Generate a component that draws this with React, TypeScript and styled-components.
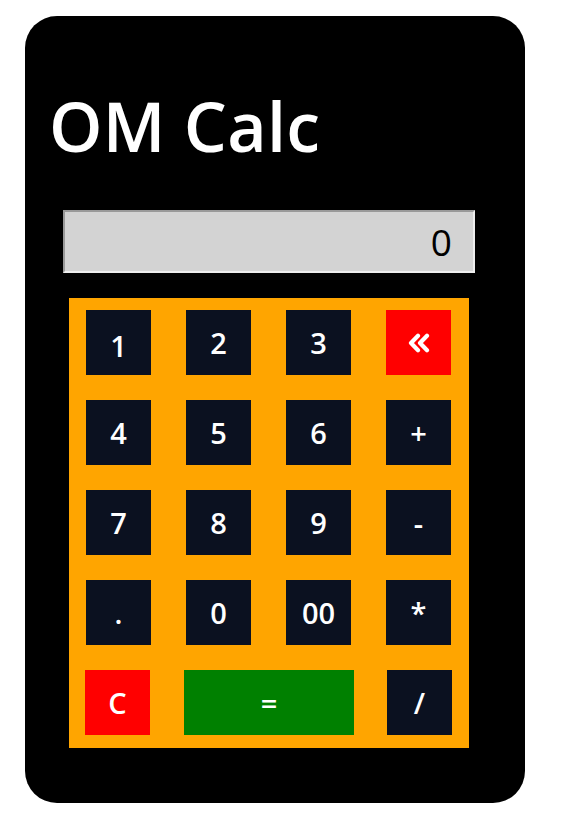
import * as React from 'react'
import styled, { createGlobalStyle } from 'styled-components'

const GlobalStyle = createGlobalStyle`
  body {
    margin: 0;
    background: #fff;
    font-family: 'Open Sans', 'Noto Sans', sans-serif;
  }
`

const Card = styled.div`
  width: 500px;
  margin: 16px 0 0 25px;
  padding: 70px 0 55px;
  box-sizing: border-box;
  background: #000;
  border-radius: 32px;
`

const Title = styled.h1`
  margin: 0;
  padding-left: 24px;
  height: 80px;
  font-size: 68px;
  line-height: 80px;
  font-weight: 600;
  letter-spacing: 0.3px;
  color: #fff;
`

const Display = styled.div`
  width: 412px;
  height: 63px;
  margin: 44px 0 0 38px;
  box-sizing: border-box;
  padding: 1px 21px 0 0;
  background: #d3d3d3;
  border: 2px solid;
  border-color: #999 #eee #eee #999;
  color: #000;
  font-size: 37px;
  line-height: 58px;
  text-align: right;
`

const Keypad = styled.div`
  width: 400px;
  margin: 25px 0 0 44px;
  padding: 12px 18px 13px 17px;
  box-sizing: border-box;
  display: grid;
  grid-template-columns: repeat(4, 65px);
  grid-auto-rows: 65px;
  column-gap: 35px;
  row-gap: 25px;
  background: #ffa500;
`

type Tone = 'dark' | 'red' | 'green'

const Key = styled.button<{ $tone?: Tone; $wide?: boolean; $drop?: number; $shift?: number }>`
  width: ${(p) => (p.$wide ? '170px' : '65px')};
  height: 65px;
  grid-column: ${(p) => (p.$wide ? 'span 2' : 'auto')};
  margin-left: ${(p) => p.$shift ?? 0}px;
  display: flex;
  align-items: center;
  justify-content: center;
  padding: ${(p) => p.$drop ?? 0}px 0 0;
  border: none;
  background: ${(p) => (p.$tone === 'red' ? '#ff0000' : p.$tone === 'green' ? '#008000' : '#0b1120')};
  color: #fff;
  font-family: 'Open Sans', 'Noto Sans', sans-serif;
  font-size: 29px;
  font-weight: 600;
  line-height: 1;
  cursor: pointer;
`

const BackIcon = () => (
  <svg width="22" height="20" viewBox="0 0 22 20" fill="none" stroke="#fff" strokeWidth="4.2" strokeLinecap="round" strokeLinejoin="round">
    <polyline points="10,2.8 3,10 10,17.2" />
    <polyline points="19,2.8 12,10 19,17.2" />
  </svg>
)

export default function App() {
  return (
    <>
      <GlobalStyle />
      <Card>
        <Title>OM Calc</Title>
        <Display>0</Display>
        <Keypad>
          <Key $drop={6}>1</Key>
          <Key>2</Key>
          <Key>3</Key>
          <Key $tone="red" aria-label="backspace">
            <BackIcon />
          </Key>
          <Key>4</Key>
          <Key>5</Key>
          <Key>6</Key>
          <Key>+</Key>
          <Key>7</Key>
          <Key>8</Key>
          <Key>9</Key>
          <Key>-</Key>
          <Key>.</Key>
          <Key>0</Key>
          <Key>00</Key>
          <Key>*</Key>
          <Key $tone="red" $shift={-1}>C</Key>
          <Key $tone="green" $wide $shift={-2}>=</Key>
          <Key $shift={1}>/</Key>
        </Keypad>
      </Card>
    </>
  )
}
